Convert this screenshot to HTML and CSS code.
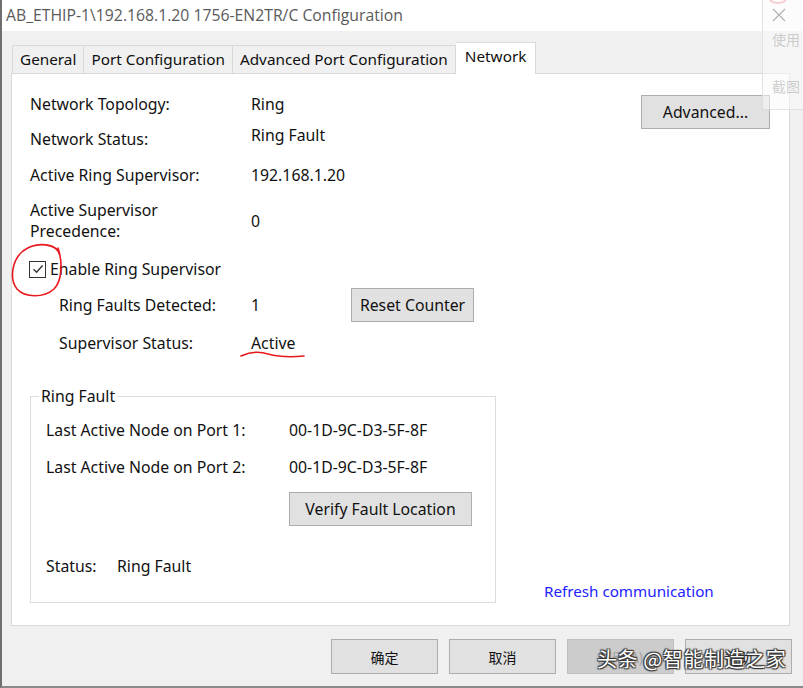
FILE: index.html
```html
<!DOCTYPE html>
<html>
<head>
<meta charset="utf-8">
<link rel="stylesheet" href="styles.css">
</head>
<body>
<div class="window">
  <div class="titlebar">
    <span class="title">AB_ETHIP-1\192.168.1.20 1756-EN2TR/C Configuration</span>
    <svg class="close" width="14" height="14" viewBox="0 0 14 14"><path d="M1 1 L13 13 M13 1 L1 13" stroke="#555" stroke-width="1.1" fill="none"/></svg>
  </div>
  <div class="client">
    <div class="tabs">
      <div class="tab">General</div>
      <div class="tab">Port Configuration</div>
      <div class="tab">Advanced Port Configuration</div>
      <div class="tab active">Network</div>
    </div>
    <div class="panel">
      <div class="main">
        <div class="row r1"><span class="label">Network Topology:</span><span class="value">Ring</span></div>
        <div class="row r2"><span class="label lowered">Network Status:</span><span class="value">Ring Fault</span></div>
        <div class="row r3"><span class="label">Active Ring Supervisor:</span><span class="value">192.168.1.20</span></div>
        <div class="row r4 centered"><span class="label two">Active Supervisor<br>Precedence:</span><span class="value">0</span></div>
        <div class="check-row">
          <span class="checkbox"><svg width="12" height="12" viewBox="0 0 12 12"><path d="M1.5 6.2 L4.6 9.2 L10.6 2.4" stroke="#3a3a3a" stroke-width="1.5" fill="none"/></svg></span>
          <span>Enable Ring Supervisor</span>
        </div>
        <div class="row sub r6 centered"><span class="label sublabel">Ring Faults Detected:</span><span class="value v-short">1</span><button class="btn reset">Reset Counter</button></div>
        <div class="row sub r7"><span class="label sublabel">Supervisor Status:</span><span class="value">Active</span></div>
        <fieldset class="group">
          <legend>Ring Fault</legend>
          <div class="grow g1"><span class="glabel">Last Active Node on Port 1:</span><span>00-1D-9C-D3-5F-8F</span></div>
          <div class="grow g2"><span class="glabel">Last Active Node on Port 2:</span><span>00-1D-9C-D3-5F-8F</span></div>
          <div class="grow g3"><span class="glabel"></span><button class="btn verify">Verify Fault Location</button></div>
          <div class="grow g4"><span class="slabel">Status:</span><span>Ring Fault</span></div>
        </fieldset>
      </div>
      <div class="side">
        <button class="btn advanced">Advanced...</button>
        <span class="link">Refresh communication</span>
      </div>
    </div>
    <div class="footer">
      <button class="btn fbtn">确定</button>
      <button class="btn fbtn">取消</button>
      <button class="btn fbtn disabled">应用(A)</button>
      <button class="btn fbtn">帮助</button>
    </div>
  </div>
</div>

<div class="float-panel">
  <span class="fp-icon"></span>
  <span class="fp-text t1">使用</span>
  <span class="fp-text t2">截图</span>
</div>

<svg class="annot" width="803" height="688" viewBox="0 0 803 688">
  <path d="M60 256 C58 243, 36 241, 23 251 C12 260, 9 279, 17 289 C25 298, 44 298, 54 289 C62 281, 63 263, 58 248" stroke="#e8181c" stroke-width="1.6" fill="none" stroke-linecap="round"/>
  <path d="M241 356 C250 352, 259 351, 268 354 C279 357, 294 357, 304 356" stroke="#e8181c" stroke-width="1.6" fill="none" stroke-linecap="round"/>
</svg>

<div class="watermark">头条 @智能制造之家</div>
</body>
</html>
```

FILE: styles.css
```css
* { box-sizing: border-box; }
html, body { margin: 0; padding: 0; }
body {
  width: 803px;
  height: 688px;
  overflow: hidden;
  background: #f0f0f0;
  font-family: "Noto Sans", "Noto Sans CJK SC", sans-serif;
  font-size: 15.8px;
  color: #111;
  position: relative;
}
.window {
  width: 803px;
  height: 688px;
  display: flex;
  flex-direction: column;
  border-left: 2px solid #6f6f6f;
  border-bottom: 2px solid #8a8a8a;
}
.titlebar {
  height: 31px;
  background: #fff;
  display: flex;
  align-items: center;
  justify-content: space-between;
  padding: 0 17px 0 4px;
  flex: none;
}
.title {
  font-family: "Open Sans", "Noto Sans", sans-serif;
  font-size: 17px;
  color: #5a5a5a;
  transform: scaleX(0.927);
  transform-origin: left center;
  white-space: nowrap;
  margin-top: -2px;
}
.close { margin-top: -2px; }
.client {
  flex: 1;
  background: #f0f0f0;
  padding: 11px 0 0 9px;
  display: flex;
  flex-direction: column;
}
.tabs {
  display: flex;
  align-items: flex-end;
  height: 31px;
  padding-left: 1px;
  position: relative;
  z-index: 1;
  font-size: 15.3px;
}
.tab {
  height: 28px;
  padding: 0 7px 2px 7px;
  border: 1px solid #d9d9d9;
  border-bottom: none;
  border-right: none;
  background: #f0f0f0;
  display: flex;
  align-items: center;
  white-space: nowrap;
}
.tab:nth-child(3) { border-right: 1px solid #d9d9d9; }
.tab.active {
  height: 32px;
  margin-bottom: -1px;
  background: #fff;
  border: 1px solid #d9d9d9;
  border-bottom: none;
  border-left: none;
  padding: 0 9px 5px 9px;
}
.panel {
  width: 779px;
  height: 553px;
  background: #fff;
  border: 1px solid #d9d9d9;
  display: flex;
  padding: 20px 19px 21px 18px;
}
.main { width: 466px; flex: none; display: flex; flex-direction: column; }
.row { display: flex; align-items: flex-start; line-height: 20px; }
.label { width: 221px; flex: none; white-space: nowrap; }
.lowered { padding-top: 4px; }
.two { line-height: 21px; }
.centered { align-items: center; }
.r2 { margin-top: 11px; }
.r3 { margin-top: 16px; }
.r4 { margin-top: 15px; }
.check-row {
  display: flex;
  align-items: center;
  margin-top: 17px;
  line-height: 20px;
  margin-left: -1px;
}
.checkbox {
  width: 17px;
  height: 17px;
  border: 1px solid #333;
  background: #fff;
  display: flex;
  align-items: center;
  justify-content: center;
  margin-right: 4px;
}
.sub { padding-left: 29px; }
.sublabel { width: 192px; }
.r6 { margin-top: 9px; height: 34px; }
.v-short { width: 100px; }
.r7 { margin-top: 11px; }
.btn {
  font-family: "Noto Sans", "Noto Sans CJK SC", sans-serif;
  font-size: 15.8px;
  color: #111;
  background: #e1e1e1;
  border: 1px solid #adadad;
  border-radius: 0;
  padding: 0;
  margin: 0;
  height: 34px;
}
.reset { width: 123px; height: 34px; }
.group {
  margin: 33px 0 0 0;
  width: 466px;
  height: 217px;
  border: 1px solid #dcdcdc;
  padding: 14px 0 0 15px;
  display: flex;
  flex-direction: column;
  min-inline-size: 0;
}
.group legend {
  padding: 0 2px;
  margin-left: -7px;
  line-height: 20px;
}
.grow { display: flex; align-items: center; line-height: 20px; }
.glabel { width: 243px; flex: none; white-space: nowrap; }
.g2 { margin-top: 17px; }
.g3 { margin-top: 15px; }
.verify { width: 183px; height: 34px; }
.g4 { margin-top: 30px; }
.slabel { width: 71px; flex: none; }
.side {
  flex: 1;
  display: flex;
  flex-direction: column;
  justify-content: space-between;
  align-items: flex-end;
}
.advanced { width: 129px; height: 34px; margin-top: 1px; }
.link {
  color: #2222ff;
  font-size: 15.2px;
  line-height: 20px;
  align-self: flex-start;
  margin-left: 48px;
  margin-bottom: 3px;
  white-space: nowrap;
}
.footer {
  display: flex;
  justify-content: flex-end;
  gap: 11px;
  padding: 13px 11px 0 0;
}
.fbtn {
  width: 107px;
  height: 35px;
  font-family: "Noto Sans CJK SC", sans-serif;
  font-size: 14px;
}
.fbtn.disabled { background: #cccccc; border-color: #bfbfbf; color: #a0a0a0; }

.float-panel {
  position: absolute;
  left: 762px;
  top: 0;
  width: 45px;
  height: 110px;
  background: rgba(250, 250, 250, 0.55);
  border-left: 1px solid rgba(210, 210, 210, 0.6);
  border-bottom: 1px solid rgba(210, 210, 210, 0.6);
}
.fp-icon {
  position: absolute;
  left: 6px;
  top: -6px;
  width: 18px;
  height: 10px;
  border: 2px solid rgba(240, 150, 150, 0.45);
  border-radius: 50%;
}
.fp-text {
  position: absolute;
  left: 9px;
  font-family: "Noto Sans CJK SC", sans-serif;
  font-size: 14px;
  color: rgba(150, 150, 150, 0.45);
  white-space: nowrap;
}
.t1 { top: 29px; }
.t2 { top: 76px; }

.annot { position: absolute; left: 0; top: 0; pointer-events: none; }

.watermark {
  position: absolute;
  left: 597px;
  top: 644px;
  font-family: "Noto Sans CJK SC", sans-serif;
  font-size: 20px;
  letter-spacing: 0.6px;
  color: #fff;
  white-space: nowrap;
  text-shadow: 1px 1px 1px #333, -1px -1px 1px #333, 1px -1px 1px #333, -1px 1px 1px #333;
}
```
